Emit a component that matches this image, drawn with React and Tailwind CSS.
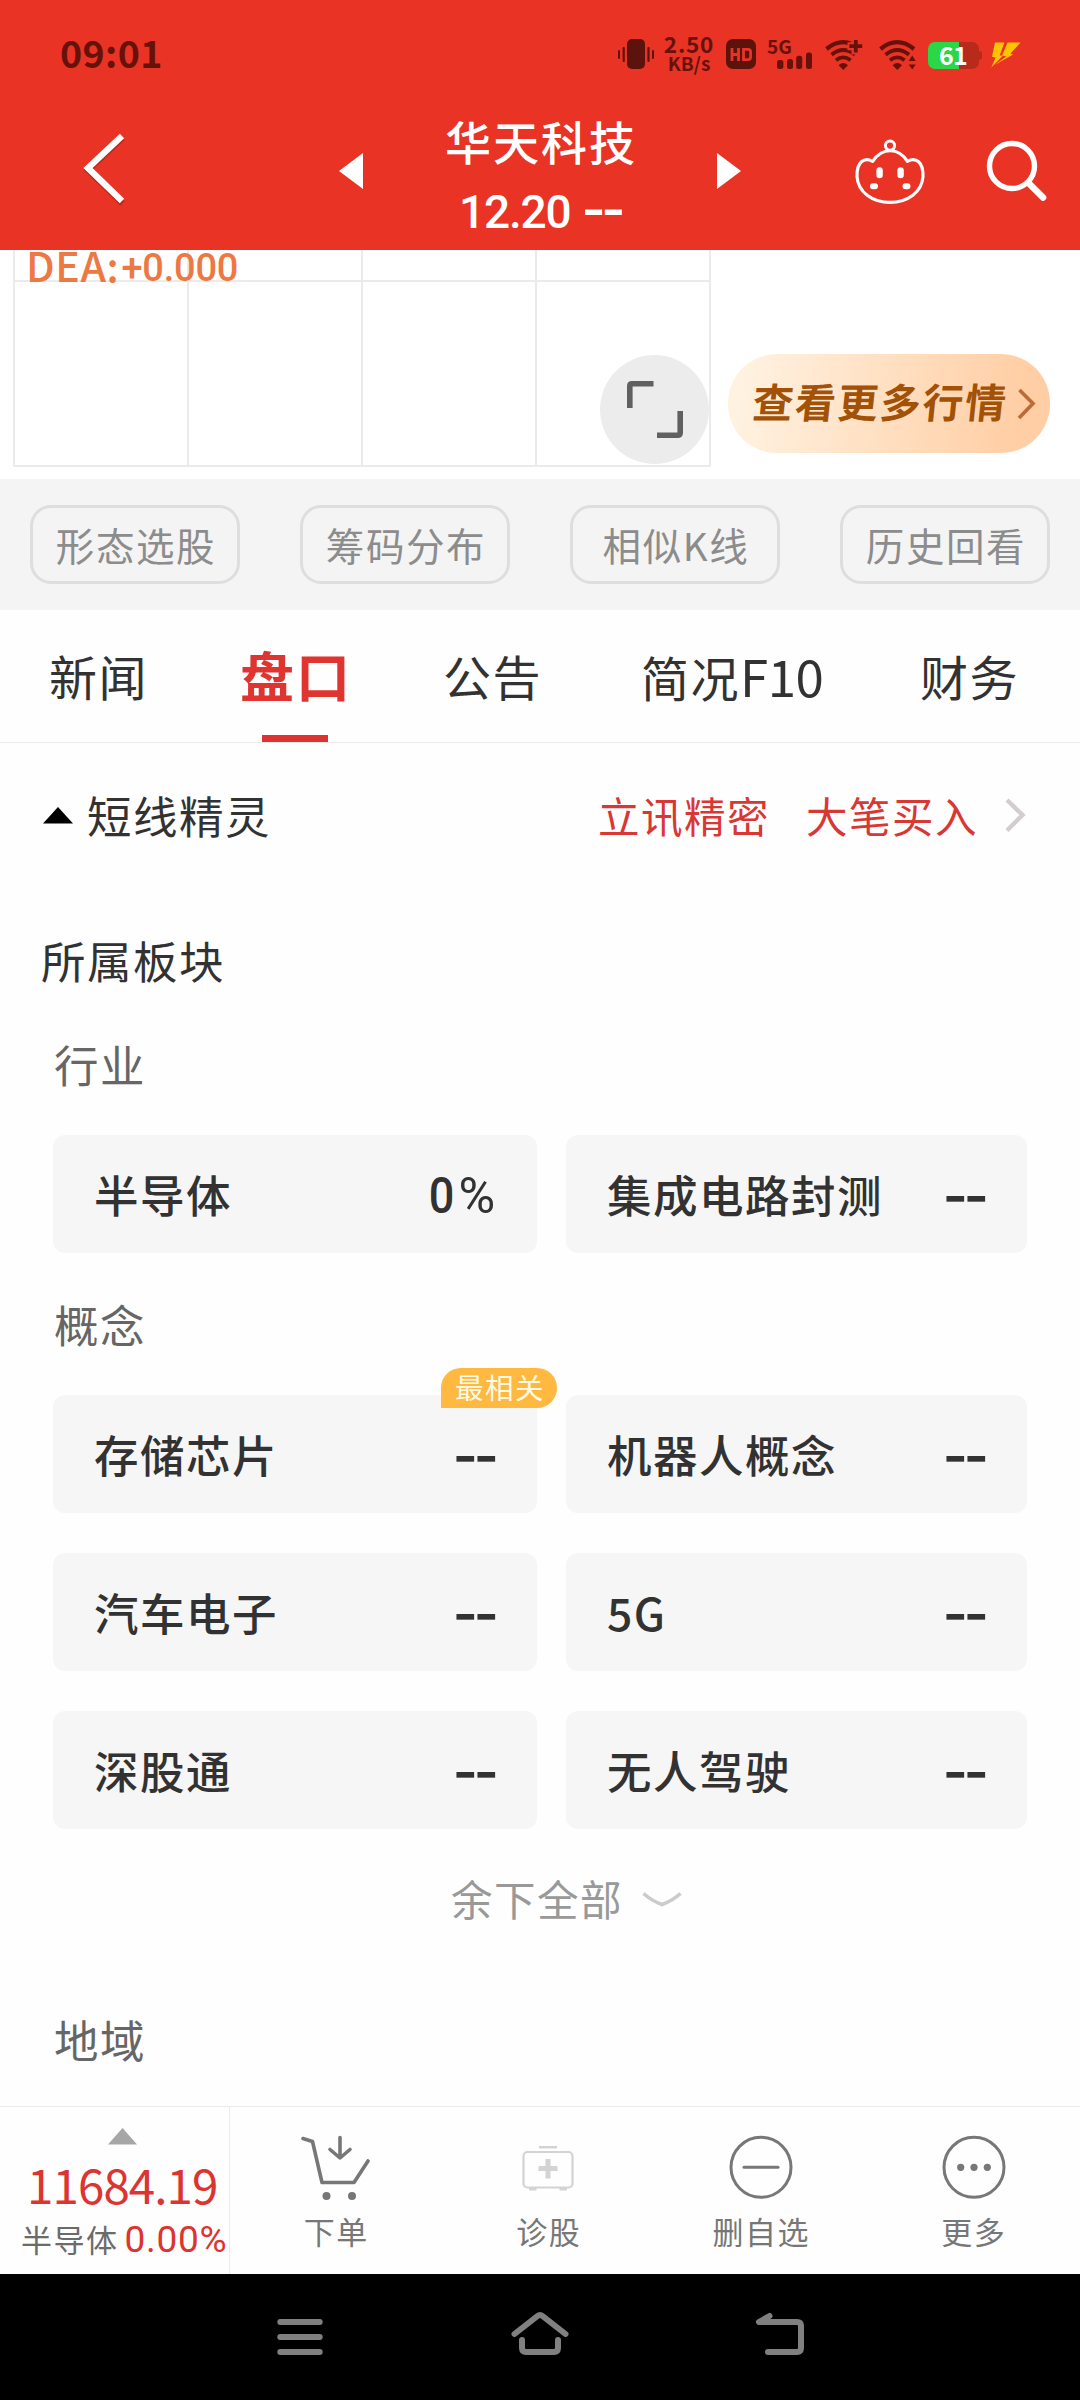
const industry = [
  { name: "半导体", value: "0%" },
  { name: "集成电路封测", value: "--" },
];

const concepts = [
  { name: "存储芯片", value: "--", tag: "最相关" },
  { name: "机器人概念", value: "--" },
  { name: "汽车电子", value: "--" },
  { name: "5G", value: "--" },
  { name: "深股通", value: "--" },
  { name: "无人驾驶", value: "--" },
];

function VibrateIcon() {
  return (
    <svg width="36" height="32" viewBox="0 0 36 32" fill="#5c130c">
      <rect x="9" y="1" width="18" height="30" rx="5" />
      <rect x="0" y="12" width="2" height="9" rx="1" />
      <rect x="4.6" y="9" width="2.2" height="15" rx="1" />
      <rect x="29.4" y="9" width="2.2" height="15" rx="1" />
      <rect x="34" y="12" width="2" height="9" rx="1" />
    </svg>
  );
}

function HdIcon() {
  return (
    <svg width="30" height="30" viewBox="0 0 30 30" fill="none">
      <rect width="30" height="30" rx="7" fill="#5c130c" />
      <path d="M6 9V22M12.5 9V22M6 15.5H12.5" stroke="#e93325" strokeWidth="2.8" />
      <path d="M17.5 10.4H22Q24.6 10.4 24.6 13V18Q24.6 20.6 22 20.6H17.5Z" stroke="#e93325" strokeWidth="2.8" />
    </svg>
  );
}

function SignalIcon() {
  return (
    <svg width="36" height="17" viewBox="0 0 36 17" fill="#66120b">
      <rect x="0" y="8" width="6.4" height="9" rx="2.5" />
      <rect x="10" y="7" width="6" height="10" rx="2.5" />
      <rect x="19.2" y="3.8" width="6" height="13.2" rx="2.5" />
      <rect x="29" y="0.5" width="6" height="16.5" rx="2.5" />
    </svg>
  );
}

function WifiFan() {
  return (
    <g>
      <path d="M1.5 9Q18.3 -4.6 35 9" strokeWidth="4.2" />
      <path d="M6.6 14.8Q18.3 5.4 30 14.8" strokeWidth="3.9" />
      <path d="M11 20.2Q18.3 14.4 25.6 20.2" strokeWidth="3.7" />
      <path d="M13.6 25.2Q18.3 21 23 25.2L18.3 30Z" fill="#66120b" stroke="none" />
    </g>
  );
}

function WifiPlusIcon() {
  return (
    <svg width="38" height="31" viewBox="0 0 38 31" fill="none" stroke="#66120b">
      <WifiFan />
      <path d="M30.5 -1V14.5M22.5 6.2H38" stroke="#e93325" strokeWidth="8" />
      <path d="M30.8 0V12.6M24.3 6.2H37.2" strokeWidth="3.8" />
    </svg>
  );
}

function WifiArrowsIcon() {
  return (
    <svg width="38" height="31" viewBox="0 0 38 31" fill="none" stroke="#66120b">
      <WifiFan />
      <path d="M29.7 21L33.2 15.4L36.7 21ZM29.7 24.4L33.2 29.6L36.7 24.4Z" fill="#66120b" stroke="#e93325" strokeWidth="1" paintOrder="stroke" />
    </svg>
  );
}

function BoltIcon() {
  return (
    <svg width="30" height="26" viewBox="0 0 30 26" fill="#ffc400">
      <path d="M4 0.6L13.5 0.4L8.6 13.4L12 13.4L0.3 25.6L4.6 15.4L1 14.8Z" />
      <path d="M16.6 0.4L29.6 0.4L19.4 11.8L22 12.6L3.6 23L15.2 14.6L11 13.6Z" />
    </svg>
  );
}

function StatusBar() {
  return (
    <div className="flex h-[108px] items-start font-bold text-[#66120b]">
      <div className="ml-[60px] mt-[32px] w-[558px] font-['Noto_Sans_CJK_SC',sans-serif] text-[37.5px] leading-[40px] tracking-[0.4px]">09:01</div>
      <div className="mt-[38px]"><VibrateIcon /></div>
      <div className="ml-[10px] mt-[34px] flex w-[50px] flex-col items-center whitespace-nowrap font-['Noto_Sans_CJK_SC',sans-serif]">
        <span className="text-[22.5px] leading-[18px] tracking-[0.8px]">2.50</span>
        <span className="text-[19px] leading-[21px]">KB/s</span>
      </div>
      <div className="ml-[12px] mt-[39px]"><HdIcon /></div>
      <div className="ml-[11px] mt-[37px] flex w-[48px] flex-col">
        <span className="font-['Noto_Sans_CJK_SC',sans-serif] text-[19px] leading-[18px]">5G</span>
        <span className="-mt-[3px] ml-[9.5px]"><SignalIcon /></span>
      </div>
      <div className="ml-[10px] mt-[40px]"><WifiPlusIcon /></div>
      <div className="ml-[16px] mt-[40px]"><WifiArrowsIcon /></div>
      <div className="ml-[10.5px] mt-[42px] flex items-center">
        <div className="flex h-[27px] w-[51px] items-start justify-center rounded-[7px] bg-[linear-gradient(90deg,#2bd647_61%,#b82a1c_61%)] font-['Noto_Sans_CJK_SC',sans-serif] text-[25px] leading-[24px] tracking-[-0.8px] text-white">61</div>
        <div className="h-[9px] w-[3px] rounded-r-[3px] bg-[#b82a1c]" />
      </div>
      <div className="ml-[9px] mt-[42px]"><BoltIcon /></div>
    </div>
  );
}

function Header() {
  return (
    <header className="h-[250px] bg-[#e93325]">
      <StatusBar />
      <div className="flex h-[142px] items-start">
        <svg className="ml-[80px] mt-[22px]" width="50" height="76" viewBox="0 0 50 76" fill="none">
          <path d="M42.5 6L8 38L42.5 71.5" stroke="#7d1c13" strokeOpacity="0.45" strokeWidth="6" transform="translate(0 2)" />
          <path d="M42 6L8 38L42 71" stroke="#fff" strokeWidth="6.4" />
        </svg>
        <svg className="ml-[209px] mt-[45px]" width="24" height="36" fill="#fff"><path d="M0 18L24 0V36Z" /></svg>
        <div className="flex w-[354px] flex-col items-center font-medium text-white">
          <div className="h-[70px] pl-[2px] font-['Noto_Sans_CJK_SC',sans-serif] text-[46px] leading-[65px] tracking-[2px]">华天科技</div>
          <div className="mt-[2px] flex h-[60px] items-baseline whitespace-pre leading-[60px]">
            <span className="font-[Roboto,sans-serif] text-[46px] tracking-[-1.2px]">12.20</span>
            <span className="ml-[11px] font-[Inter,sans-serif] text-[52px] font-semibold tracking-[-4.4px]">--</span>
          </div>
        </div>
        <svg className="mt-[45px]" width="24" height="36" fill="#fff"><path d="M24 18L0 0V36Z" /></svg>
        <svg className="ml-[114px] mt-[31px]" width="70" height="68" viewBox="0 0 70 68" fill="none" stroke="#fff">
          <circle cx="35" cy="6.6" r="4.6" strokeWidth="3" />
          <path d="M17.6 22.4C27 8.2 43.6 8.2 52.4 22.4C61 17.8 68.4 23 68 37.5C67 53.5 52 63.4 35 63.4C18 63.4 3 53.5 2 37.5C1.600 23 9 17.800 17.600 22.400Z" strokeWidth="3.2" strokeLinejoin="round" />
          <path d="M24.600 31.500V36M45.600 31.500V36" strokeWidth="6.400" strokeLinecap="round" />
          <path d="M18 47.200H20M50.500 47.200H52.500" strokeWidth="6" strokeLinecap="round" />
        </svg>
        <svg className="ml-[61px] mt-[31px]" width="62" height="64" viewBox="0 0 62 64" fill="none" stroke="#fff">
          <circle cx="26" cy="27" r="22.500" strokeWidth="5.400" />
          <path d="M42.500 44L57 58.500" strokeWidth="6.600" strokeLinecap="round" />
        </svg>
      </div>
    </header>
  );
}

/* Lower end of the indicator chart: grid, value label and the two floating buttons. */
function ChartStrip() {
  return (
    <section className="relative h-[229px] bg-white">
      <div className="ml-[13px] grid h-[217px] w-[698px] grid-cols-4 grid-rows-[32px_185px] border-b-2 border-r-2 border-[#ebebeb]">
        {[0, 1, 2, 3, 4, 5, 6, 7].map((i) => (
          <div key={i} className={i < 4 ? "border-b-2 border-l-2 border-[#ebebeb]" : "border-l-2 border-[#ebebeb]"} />
        ))}
      </div>
      <div className="absolute left-[26px] top-[-6px] flex items-baseline font-medium leading-[40px] text-[#ee7842]">
        <span className="font-['Noto_Sans_CJK_SC',sans-serif] text-[41px] tracking-[0.6px]">DEA:</span>
        <span className="relative -top-[1px] ml-[2px] font-[Roboto,sans-serif] text-[38px] tracking-[-0.2px]">+0.000</span>
      </div>
      <div className="absolute left-[600px] top-[105px] flex size-[109px] items-center justify-center rounded-full bg-[#ececec]">
        <svg width="56" height="57" viewBox="0 0 56 57" fill="none" stroke="#606060" strokeWidth="5.600">
          <path d="M2.800 27V5Q2.800 2.800 5 2.800H26.500M30 54.200H50.500Q53.200 54.200 53.200 51.500V30" />
        </svg>
      </div>
      <div className="absolute left-[728px] top-[104px] flex h-[99px] w-[322px] items-center rounded-[49px] bg-[linear-gradient(100deg,#fff2e1_5%,#ffcea4_90%)]">
        <span className="-mt-[5px] ml-[25px] -skew-x-6 whitespace-nowrap font-['Noto_Sans_CJK_SC',sans-serif] text-[40.5px] font-bold leading-[60px] tracking-[2px] text-[#a35106]">查看更多行情</span>
        <svg className="ml-[9px]" width="19" height="32" viewBox="0 0 19 32" fill="none" stroke="#bd6a35" strokeWidth="3.600"><path d="M2.500 2L16 15.500L2 30" /></svg>
      </div>
    </section>
  );
}

function ToolButtons() {
  return (
    <div className="flex h-[131px] items-start justify-between bg-[#f4f4f4] px-[30px] pt-[26px]">
      {["形态选股", "筹码分布", "相似K线", "历史回看"].map((t) => (
        <button key={t} className="flex h-[79px] w-[210px] items-center justify-center rounded-[21px] border-[3px] border-[#dedede] pl-[2px] text-[38.500px] leading-none tracking-[1.600px] text-[#8c8c8c]">{t}</button>
      ))}
    </div>
  );
}

function Tabs() {
  return (
    <nav className="flex h-[133px] items-start border-b border-[#ebebeb] pl-[49px] pt-[30px] text-[48px] leading-[70px] tracking-[1.500px] text-[#323232]">
      <span className="w-[190px]">新闻</span>
      <span className="flex w-[204px] flex-col">
        <span className="pl-[1px] text-[54px] font-bold tracking-[2px] text-[#e03430]">盘口</span>
        <span className="ml-[23px] mt-[25px] h-[7px] w-[66px] bg-[#dd3431]" />
      </span>
      <span className="w-[198px]">公告</span>
      <span className="w-[279px] whitespace-nowrap">简况<span className="text-[51px] tracking-[-0.5px]">F10</span></span>
      <span>财务</span>
    </nav>
  );
}

function Card({ item }) {
  return (
    <div className="relative flex h-[118px] items-center justify-between rounded-[12px] bg-[#f6f6f6] pl-[41px] pr-[40px] text-[44.500px] font-medium leading-[60px] tracking-[1.500px] text-[#323232]">
      <span>{item.name}</span>
      {item.value === "--" ? (
        <span className="mr-[2px] mt-[3px] font-[Inter,sans-serif] text-[54px] font-semibold tracking-[-4px]">--</span>
      ) : (
        <span className="mr-[2px] mt-[4px] font-[Roboto,sans-serif] text-[50px] font-normal tracking-[0px]">
          <span className="mr-[4px] inline-block origin-right scale-x-90 font-medium">0</span>
          <span>%</span>
        </span>
      )}
      {item.tag && (
        <span className="absolute left-[388px] top-[-27px] h-[40px] w-[116px] rounded-[20px] rounded-bl-none bg-[#ffb840] pl-[14px] text-[28.500px] font-normal leading-[38px] tracking-[1.500px] text-[#fffbe6]">{item.tag}</span>
      )}
    </div>
  );
}

function Sectors() {
  return (
    <main className="h-[1363px] overflow-hidden text-[44.500px] leading-[60px] tracking-[1.500px] text-[#323232]">
      <div className="mt-[42px] flex h-[60px] items-center">
        <svg className="ml-[43px]" width="30" height="18"><path d="M0 17.500L15 1L30 17.500Z" fill="#000" /></svg>
        <span className="ml-[14px] w-[511px]">短线精灵</span>
        <span className="w-[208px] text-[41.500px] text-[#d93734]">立讯精密</span>
        <span className="text-[41.500px] text-[#d93734]">大笔买入</span>
        <svg className="ml-[26px]" width="22" height="36" viewBox="0 0 22 36" fill="none" stroke="#d2cece" strokeWidth="4.400"><path d="M3 3L18.500 18L3 33.500" /></svg>
      </div>
      <h2 className="ml-[41px] mt-[85px]">所属板块</h2>
      <h3 className="ml-[54px] mt-[44px] text-[#666]">行业</h3>
      <div className="ml-[53px] mt-[41px] grid grid-cols-[484px_461px] gap-x-[29px]">
        {industry.map((c) => <Card key={c.name} item={c} />)}
      </div>
      <h3 className="ml-[54px] mt-[41px] text-[#666]">概念</h3>
      <div className="ml-[53px] mt-[41px] grid grid-cols-[484px_461px] gap-x-[29px] gap-y-[40px]">
        {concepts.map((c) => <Card key={c.name} item={c} />)}
      </div>
      <div className="ml-[451px] mt-[39px] flex items-center text-[41.500px] text-[#999]">
        余下全部
        <svg className="ml-[19px] mt-[3px]" width="40" height="18" viewBox="0 0 40 18" fill="none" stroke="#cbcbcb" strokeWidth="3.600"><path d="M1.500 2.500Q10 10 20 13.500Q30 10 38.500 2.500" /></svg>
      </div>
      <h3 className="ml-[54px] mt-[81px] text-[#666]">地域</h3>
    </main>
  );
}

function CartIcon() {
  return (
    <svg width="70" height="70" viewBox="0 0 70 70" fill="none" stroke="#777" strokeWidth="3.600" strokeLinecap="round" strokeLinejoin="round">
      <path d="M2 5.500L11.500 8.500L21 49.500H53L67 28" />
      <path d="M39 4.500V25M29 16.500L39 25L49 16.500" />
      <circle cx="25.500" cy="63" r="4" fill="#777" stroke="none" />
      <circle cx="51" cy="63" r="4" fill="#777" stroke="none" />
    </svg>
  );
}

function MedkitIcon() {
  return (
    <svg width="70" height="70" viewBox="0 0 70 70" fill="none" stroke="#d3d3d3">
      <rect x="9.500" y="19" width="49" height="35.500" rx="4" strokeWidth="2.200" />
      <path d="M25 14.200H43" strokeWidth="2.400" />
      <path d="M34 26V45.500M24.500 35.500H43.500" strokeWidth="5" />
      <path d="M15 56.200H22.500M45.500 56.200H53" strokeWidth="2.800" />
    </svg>
  );
}

function MinusCircleIcon() {
  return (
    <svg width="70" height="70" viewBox="0 0 70 70" fill="none" stroke="#777" strokeWidth="3">
      <circle cx="35" cy="34.300" r="30" />
      <path d="M18 34.300H52" strokeLinecap="round" />
    </svg>
  );
}

function MoreCircleIcon() {
  return (
    <svg width="70" height="70" viewBox="0 0 70 70" fill="#777">
      <circle cx="35" cy="34.300" r="30" fill="none" stroke="#777" strokeWidth="3" />
      <circle cx="21.700" cy="34.300" r="3.600" />
      <circle cx="35" cy="34.300" r="3.600" />
      <circle cx="48.300" cy="34.300" r="3.600" />
    </svg>
  );
}

const actions = [
  { label: "下单", Icon: CartIcon },
  { label: "诊股", Icon: MedkitIcon },
  { label: "删自选", Icon: MinusCircleIcon },
  { label: "更多", Icon: MoreCircleIcon },
];

function ActionBar() {
  return (
    <footer className="flex h-[168px] border-t border-[#ebebeb]">
      <div className="flex w-[230px] shrink-0 flex-col border-r border-[#ebebeb]">
        <svg className="ml-[108px] mt-[21px]" width="29" height="17"><path d="M0 16.500L14.500 0L29 16.500Z" fill="#a6a6a6" /></svg>
        <div className="ml-[27px] mt-[12px] whitespace-nowrap text-[47.500px] leading-[54px] tracking-[-0.900px] text-[#dc3431]">11684.19</div>
        <div className="ml-[21px] mt-[8px] flex items-baseline whitespace-nowrap text-[31px] leading-[40px] tracking-[1.500px] text-[#6b6b6b]">
          半导体
          <span className="ml-[6px] font-[Roboto,sans-serif] text-[37px] tracking-[0.700px] text-[#dc3431]">0.00%</span>
        </div>
      </div>
      {actions.map(({ label, Icon }) => (
        <div key={label} className="flex flex-1 flex-col items-center pt-[26px] text-[31px] leading-[40px] tracking-[1.500px] text-[#777]">
          <Icon />
          <span className="mt-[8px]">{label}</span>
        </div>
      ))}
    </footer>
  );
}

function SystemNav() {
  return (
    <div className="flex h-[126px] items-start bg-black pt-[36px]">
      <svg className="ml-[276px]" width="48" height="48" viewBox="0 0 48 48" stroke="#808080" strokeWidth="6" strokeLinecap="round"><path d="M4.300 12H43.700M4.300 27H43.700M4.300 42H43.700" /></svg>
      <svg className="ml-[186px]" width="60" height="48" viewBox="0 0 60 48" fill="none" stroke="#808080" strokeWidth="6" strokeLinecap="round" strokeLinejoin="round">
        <path d="M4.500 24L27.500 6Q30 4 32.500 6L55.500 24" />
        <path d="M12 30V38Q12 42 16 42H44Q48 42 48 38V30" />
      </svg>
      <svg className="ml-[184px]" width="54" height="48" viewBox="0 0 54 48" fill="none" stroke="#808080" strokeWidth="6" strokeLinecap="round" strokeLinejoin="round">
        <path d="M15.500 6L5 12H43Q47 12 47 16V38Q47 42 43 42H14" />
      </svg>
    </div>
  );
}

export default function App() {
  return (
    <div className="h-[2400px] w-[1080px] overflow-hidden bg-[#fefefe] font-['Noto_Sans_CJK_SC',sans-serif]">
      <Header />
      <ChartStrip />
      <ToolButtons />
      <Tabs />
      <Sectors />
      <ActionBar />
      <SystemNav />
    </div>
  );
}
